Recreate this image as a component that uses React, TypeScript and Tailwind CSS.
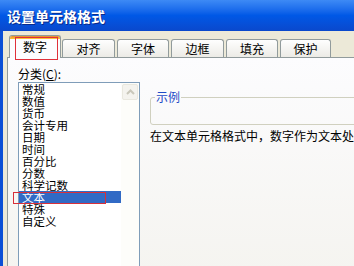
import React from "react"

const categories = ["常规", "数值", "货币", "会计专用", "日期", "时间", "百分比", "分数", "科学记数", "文本", "特殊", "自定义"]

const tabs = [
    { label: "对齐", w: "w-[53px]", ml: "ml-[1px]" },
    { label: "字体", w: "w-[52px]", ml: "ml-[2px]" },
    { label: "边框", w: "w-[53px]", ml: "ml-[2px]" },
    { label: "填充", w: "w-[52px]", ml: "ml-[2px]" },
    { label: "保护", w: "w-[51px]", ml: "ml-[2px]" },
]

function App() {
    return (
        <div className="relative w-[354px] h-[266px] overflow-hidden bg-[#ece9d8] flex flex-col font-['Noto_Sans_CJK_SC','Noto_Sans',sans-serif] text-black">
            {/* title bar */}
            <div className="h-[31px] shrink-0 flex items-center pl-[7px] bg-linear-to-b from-[#3d8af5] via-[#0058e6] to-[#0a48cc]">
                <span className="text-white font-bold text-[14px] leading-[16px] [text-shadow:1px_1px_#0b2a8a]">设置单元格格式</span>
            </div>

            <div className="flex-1 flex flex-col border-l-[3px] border-[#0b4fd6] pl-[4px] pt-[4px]">
                {/* tabs */}
                <div className="h-[22px] shrink-0 flex items-end relative z-10">
                    <div className="ml-[2px] w-[52px] h-[23px] mb-[-1px] flex flex-col rounded-t-[3px] border border-b-0 border-[#919b9c] bg-[#fcfcfe] overflow-hidden">
                        <div className="h-[3px] bg-linear-to-b from-[#e68b2c] to-[#ffc73c]" />
                        <div className="flex-1 flex items-start justify-center pt-[1px] text-[12px] leading-[14px]">数字</div>
                    </div>
                    {tabs.map((t) => (
                        <div
                            key={t.label}
                            className={`${t.w} ${t.ml} h-[18px] flex items-center justify-center rounded-t-[3px] border border-b-0 border-[#919b9c] bg-linear-to-b from-[#fefefe] to-[#ecebe6] text-[12px] leading-[14px]`}
                        >
                            {t.label}
                        </div>
                    ))}
                </div>

                {/* panel */}
                <div className="flex-1 w-[420px] flex border border-[#919b9c] bg-linear-to-b from-[#fcfcfe] to-[#f4f3ee] pl-[10px] pt-[9px]">
                    <div className="w-[122px] shrink-0 flex flex-col">
                        <div className="text-[12px] leading-[14px]">
                            分类(<span className="underline">C</span>):
                        </div>
                        <div className="mt-[1px] h-[220px] flex border border-[#7f9db9] bg-white">
                            <div className="w-[102px] flex flex-col">
                                {categories.map((c) => (
                                    <div
                                        key={c}
                                        className={`h-[12px] pl-[3px] text-[11.5px] leading-[12px] whitespace-nowrap ${c === "文本" ? "bg-[#316ac5] text-white" : ""}`}
                                    >
                                        {c}
                                    </div>
                                ))}
                            </div>
                            <div className="w-[18px] bg-[#fdfdfa] pt-[1px] pl-[1px]">
                                <div className="w-[16px] h-[16px] rounded-[2px] border border-[#e9e8df] bg-[#f4f3ee] flex items-center justify-center">
                                    <svg width="9" height="6" viewBox="0 0 9 6">
                                        <path d="M1 5 L4.5 1.5 L8 5" fill="none" stroke="#c9c7ba" strokeWidth="2" />
                                    </svg>
                                </div>
                            </div>
                        </div>
                    </div>

                    <div className="ml-[10px] pt-[23px] flex flex-col">
                        <fieldset className="h-[35px] w-[260px] rounded-[3px] border border-[#d0d0bf] pl-[4px]">
                            <legend className="px-[1px] text-[12px] leading-[14px] text-[#1e4bc7]">示例</legend>
                        </fieldset>
                        <div className="mt-[4px] text-[12px] leading-[14px] whitespace-nowrap">
                            在文本单元格格式中，数字作为文本处理。单元格显示的内容与输入的内容完全一致。
                        </div>
                    </div>
                </div>
            </div>

            {/* red annotation boxes */}
            <div className="absolute left-[15px] top-[37px] w-[43px] h-[23px] border border-[#e0303a] z-20" />
            <div className="absolute left-[13px] top-[192px] w-[93px] h-[12px] border border-[#d8303a] z-20" />
        </div>
    )
}

export default App
